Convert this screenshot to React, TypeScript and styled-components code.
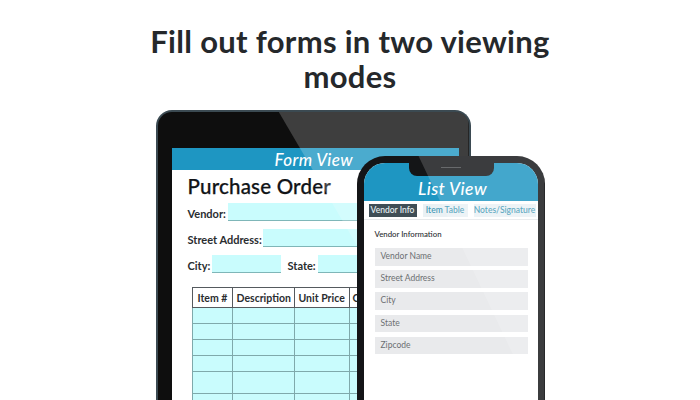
import React from "react"
import styled, { createGlobalStyle } from "styled-components"

const GlobalStyle = createGlobalStyle`
    html, body {
        margin: 0;
        padding: 0;
        background: #ffffff;
    }
    * {
        box-sizing: border-box;
    }
`

const Page = styled.div`
    width: 700px;
    height: 400px;
    overflow: hidden;
    display: flex;
    flex-direction: column;
    align-items: center;
    font-family: Lato, "Liberation Sans", sans-serif;
    color: #111417;
`

const Title = styled.h1`
    width: 430px;
    margin: 24px 0 0;
    font-size: 31px;
    line-height: 35px;
    font-weight: 700;
    letter-spacing: 0.3px;
    text-align: center;
    color: #25282b;
`

const Devices = styled.div`
    position: relative;
    width: 389px;
    margin: 16px 0 0;
    flex: 1;
`

const Tablet = styled.div`
    position: relative;
    width: 315px;
    height: 310px;
    padding: 36px 10px 0 14px;
    border-radius: 16px;
    background: #0e0e0e;
    border: 2px solid #3b4a52;
    border-bottom: 0;
    overflow: hidden;

    &::after {
        content: "";
        position: absolute;
        inset: 0;
        background: rgba(255, 255, 255, 0.2);
        clip-path: polygon(39% 0, 100% 0, 100% 100%, 97% 100%);
        pointer-events: none;
    }
`

const TabletScreen = styled.div`
    height: 100%;
    background: #ffffff;
`

const ScreenBand = styled.div`
    height: 22px;
    padding-left: 103px;
    background: #1e96c2;
    color: #ffffff;
    font-size: 17px;
    line-height: 23px;
    font-style: italic;
    font-weight: 500;
    letter-spacing: 0.4px;
`

const FormBody = styled.div`
    padding: 4px 0 0 16px;
`

const FormHeading = styled.h2`
    margin: 0 0 4px;
    font-size: 20.5px;
    line-height: 25px;
    font-weight: 500;
    letter-spacing: 0.2px;
    color: #111417;
    -webkit-text-stroke: 0.25px #111417;
`

const FieldRow = styled.div`
    display: flex;
    align-items: flex-end;
    height: 18px;
    margin-bottom: 8px;
    font-size: 11px;
    line-height: 15px;
    font-weight: 700;
    color: #2a2d30;
`

const FieldLabel = styled.span<{ $width: number; $inset?: number }>`
    flex: none;
    width: ${(p) => p.$width}px;
    padding-left: ${(p) => p.$inset ?? 0}px;
`

const FieldInput = styled.span<{ $width?: number }>`
    display: block;
    flex: ${(p) => (p.$width ? "none" : "1")};
    width: ${(p) => (p.$width ? `${p.$width}px` : "auto")};
    height: 18px;
    background: #c9fcfd;
    border-bottom: 1px solid #7fb6b8;
`

const ItemTable = styled.table`
    width: 220px;
    margin: 14px 0 0 4px;
    border-collapse: collapse;
    table-layout: fixed;
    border: 1px solid #555a5e;

    tbody tr:nth-child(5) td {
        height: 22px;
    }
`

const HeadCell = styled.th<{ $width: number; $inset: number }>`
    width: ${(p) => p.$width}px;
    height: 20px;
    padding: 0 0 0 ${(p) => p.$inset}px;
    border: 1px solid #555a5e;
    background: #ffffff;
    font-size: 10.5px;
    font-weight: 700;
    color: #2a2d30;
    text-align: left;
    white-space: nowrap;
    overflow: hidden;
`

const BodyCell = styled.td`
    height: 16px;
    padding: 0;
    background: #c9fcfd;
    border: 1px solid #7fa9ab;
`

const Phone = styled.div`
    position: absolute;
    left: 201px;
    top: 46px;
    width: 188px;
    height: 270px;
    padding: 7px;
    border-radius: 28px;
    background: #141517;
    overflow: hidden;

    &::after {
        content: "";
        position: absolute;
        inset: 0;
        background: rgba(255, 255, 255, 0.17);
        clip-path: polygon(33% 0, 100% 0, 100% 98%);
        pointer-events: none;
    }
`

const PhoneScreen = styled.div`
    position: relative;
    height: 100%;
    border-radius: 21px 21px 0 0;
    overflow: hidden;
    background: #ffffff;
`

const PhoneBand = styled.div`
    height: 38px;
    padding: 15px 0 0 4px;
    background: #1e96c2;
    color: #ffffff;
    font-size: 17.5px;
    line-height: 22px;
    font-style: italic;
    font-weight: 500;
    letter-spacing: 0.4px;
    text-align: center;
`

const Notch = styled.div`
    position: absolute;
    top: 0;
    left: 45px;
    width: 85px;
    height: 13px;
    border-radius: 0 0 8px 8px;
    background: #141517;

    &::after {
        content: "";
        position: absolute;
        left: 32px;
        top: 4px;
        width: 20px;
        height: 1px;
        background: #4a4c4f;
    }
`

const TabBar = styled.div`
    display: flex;
    align-items: center;
    gap: 6px;
    height: 19px;
    padding: 3px 0 2px 5px;
    border-bottom: 1px solid #e6e9eb;
    font-size: 8.5px;
    font-weight: 500;
`

const TabItem = styled.div<{ $active?: boolean; $width: number }>`
    flex: none;
    width: ${(p) => p.$width}px;
    height: 13px;
    line-height: 13px;
    text-align: center;
    white-space: nowrap;
    background: ${(p) => (p.$active ? "#3f4e56" : "#eaf1f4")};
    color: ${(p) => (p.$active ? "#e8f2f5" : "#3d97b5")};
`

const ListBody = styled.div`
    padding: 9px 10px 0 11px;
`

const SectionLabel = styled.div`
    margin-bottom: 9px;
    font-size: 7.8px;
    line-height: 10px;
    font-weight: 500;
    color: #2a2d30;
`

const ListField = styled.div`
    height: 17.5px;
    margin-bottom: 4.7px;
    padding-left: 6px;
    background: #e9eaec;
    color: #6c6f72;
    font-size: 8.5px;
    line-height: 17px;
`

const rows = [0, 1, 2, 3, 4, 5]
const columns = [
    { label: "Item #", width: 40, inset: 5 },
    { label: "Description", width: 62, inset: 4 },
    { label: "Unit Price", width: 55, inset: 4 },
    { label: "Qty", width: 63, inset: 3 },
]
const listFields = ["Vendor Name", "Street Address", "City", "State", "Zipcode"]

const App: React.FC = () => {
    return (
        <Page>
            <GlobalStyle />
            <Title>Fill out forms in two viewing modes</Title>
            <Devices>
                <Tablet>
                    <TabletScreen>
                        <ScreenBand>Form View</ScreenBand>
                        <FormBody>
                            <FormHeading>Purchase Order</FormHeading>
                            <FieldRow>
                                <FieldLabel $width={40}>Vendor:</FieldLabel>
                                <FieldInput />
                            </FieldRow>
                            <FieldRow>
                                <FieldLabel $width={75}>Street Address:</FieldLabel>
                                <FieldInput />
                            </FieldRow>
                            <FieldRow>
                                <FieldLabel $width={24}>City:</FieldLabel>
                                <FieldInput $width={69} />
                                <FieldLabel $width={37} $inset={7}>State:</FieldLabel>
                                <FieldInput />
                            </FieldRow>
                            <ItemTable>
                                <thead>
                                    <tr>
                                        {columns.map((c) => (
                                            <HeadCell key={c.label} $width={c.width} $inset={c.inset}>{c.label}</HeadCell>
                                        ))}
                                    </tr>
                                </thead>
                                <tbody>
                                    {rows.map((r) => (
                                        <tr key={r}>
                                            {columns.map((c) => (
                                                <BodyCell key={c.label} />
                                            ))}
                                        </tr>
                                    ))}
                                </tbody>
                            </ItemTable>
                        </FormBody>
                    </TabletScreen>
                </Tablet>
                <Phone>
                    <PhoneScreen>
                        <Notch />
                        <PhoneBand>List View</PhoneBand>
                        <TabBar>
                            <TabItem $active $width={48}>Vendor Info</TabItem>
                            <TabItem $width={45}>Item Table</TabItem>
                            <TabItem $width={62}>Notes/Signature</TabItem>
                        </TabBar>
                        <ListBody>
                            <SectionLabel>Vendor Information</SectionLabel>
                            {listFields.map((f) => (
                                <ListField key={f}>{f}</ListField>
                            ))}
                        </ListBody>
                    </PhoneScreen>
                </Phone>
            </Devices>
        </Page>
    )
}

export default App
